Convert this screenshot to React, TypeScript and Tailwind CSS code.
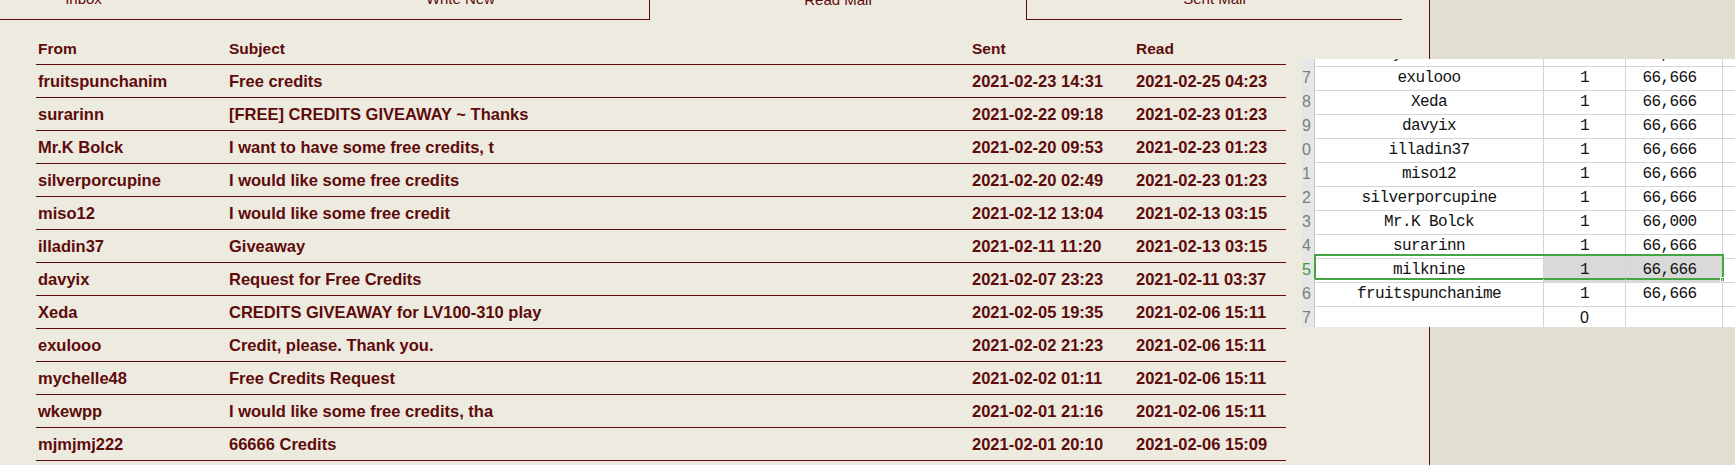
import React from 'react';

interface Mail {
  from: string;
  subject: string;
  sent: string;
  read: string;
}

const mails: Mail[] = [
  { from: 'fruitspunchanim', subject: 'Free credits', sent: '2021-02-23 14:31', read: '2021-02-25 04:23' },
  { from: 'surarinn', subject: '[FREE] CREDITS GIVEAWAY ~ Thanks', sent: '2021-02-22 09:18', read: '2021-02-23 01:23' },
  { from: 'Mr.K Bolck', subject: 'I want to have some free credits, t', sent: '2021-02-20 09:53', read: '2021-02-23 01:23' },
  { from: 'silverporcupine', subject: 'I would like some free credits', sent: '2021-02-20 02:49', read: '2021-02-23 01:23' },
  { from: 'miso12', subject: 'I would like some free credit', sent: '2021-02-12 13:04', read: '2021-02-13 03:15' },
  { from: 'illadin37', subject: 'Giveaway', sent: '2021-02-11 11:20', read: '2021-02-13 03:15' },
  { from: 'davyix', subject: 'Request for Free Credits', sent: '2021-02-07 23:23', read: '2021-02-11 03:37' },
  { from: 'Xeda', subject: 'CREDITS GIVEAWAY for LV100-310 play', sent: '2021-02-05 19:35', read: '2021-02-06 15:11' },
  { from: 'exulooo', subject: 'Credit, please. Thank you.', sent: '2021-02-02 21:23', read: '2021-02-06 15:11' },
  { from: 'mychelle48', subject: 'Free Credits Request', sent: '2021-02-02 01:11', read: '2021-02-06 15:11' },
  { from: 'wkewpp', subject: 'I would like some free credits, tha', sent: '2021-02-01 21:16', read: '2021-02-06 15:11' },
  { from: 'mjmjmj222', subject: '66666 Credits', sent: '2021-02-01 20:10', read: '2021-02-06 15:09' },
];

interface SheetRow {
  n: number;
  name: string;
  qty: string;
  amount: string;
}

const sheet: SheetRow[] = [
  { n: 16, name: 'mychelle48', qty: '1', amount: '66,666' },
  { n: 17, name: 'exulooo', qty: '1', amount: '66,666' },
  { n: 18, name: 'Xeda', qty: '1', amount: '66,666' },
  { n: 19, name: 'davyix', qty: '1', amount: '66,666' },
  { n: 20, name: 'illadin37', qty: '1', amount: '66,666' },
  { n: 21, name: 'miso12', qty: '1', amount: '66,666' },
  { n: 22, name: 'silverporcupine', qty: '1', amount: '66,666' },
  { n: 23, name: 'Mr.K Bolck', qty: '1', amount: '66,000' },
  { n: 24, name: 'surarinn', qty: '1', amount: '66,666' },
  { n: 25, name: 'milknine', qty: '1', amount: '66,666' },
  { n: 26, name: 'fruitspunchanime', qty: '1', amount: '66,666' },
  { n: 27, name: '', qty: '0', amount: '' },
];

const cols = 'grid grid-cols-[191px_743px_164px_152px]';

export default function App() {
  return (
    <div className="relative flex w-[1735px] h-[465px] overflow-hidden bg-[#E2DFD2] font-['Liberation_Sans',Arial,sans-serif] text-[#5e0b0b]">
      {/* mail page */}
      <div className="w-[1430px] h-full shrink-0 bg-[#EDEADF] border-r border-[#5c0a0a] overflow-hidden">
        {/* tabs */}
        <div className="flex -ml-[105px] -mt-[21px] h-[41px] text-[15px]">
          <div className="w-[377px] shrink-0 flex items-center justify-center border-b border-[#5c0a0a]">Inbox</div>
          <div className="w-[377px] shrink-0 flex items-center justify-center border-b border-[#5c0a0a]">Write New</div>
          <div className="w-[378px] shrink-0 flex items-center justify-center pt-[2px] border-l border-r border-[#5c0a0a]">Read Mail</div>
          <div className="w-[375px] shrink-0 flex items-center justify-center border-b border-[#5c0a0a]">Sent Mail</div>
        </div>

        {/* mail list */}
        <div className="mt-[12px] ml-[36px] w-[1250px] text-[16.5px] font-bold">
          <div className={`${cols} h-[33px] items-center border-b border-[#5c0a0a] text-[15.5px] pt-[1px]`}>
            <div className="pl-[2px]">From</div>
            <div className="pl-[2px]">Subject</div>
            <div className="pl-[2px]">Sent</div>
            <div className="pl-[2px]">Read</div>
          </div>
          {mails.map((m, i) => (
            <div key={i} className={`${cols} h-[33px] items-center border-b border-[#5c0a0a] whitespace-nowrap`}>
              <div className="pl-[2px]">{m.from}</div>
              <div className="pl-[2px]">{m.subject}</div>
              <div className="pl-[2px]">{m.sent}</div>
              <div className="pl-[2px]">{m.read}</div>
            </div>
          ))}
        </div>
      </div>
      <div className="flex-1" />

      {/* spreadsheet window lying over the page */}
      <div className="absolute left-[1302px] top-[59px] w-[433px] h-[268px] overflow-hidden bg-white">
        <div className="-mt-[20px]">
          {sheet.map((r) => {
            const sel = r.n === 25;
            return (
              <div
                key={r.n}
                className="relative grid grid-cols-[13px_229px_82px_97px_12px] h-[24px] font-['Liberation_Mono','Noto_Sans_CJK_SC',monospace] text-[16px] tracking-[-0.6px] text-[#111]"
              >
                <div className="overflow-hidden flex justify-end items-center pt-[2px] pr-[3px] bg-[#E6E6E6] border-r border-b border-[#C8C8C8] font-['Liberation_Sans',sans-serif] tracking-normal">
                  <span className={sel ? 'text-[#3B9B3B]' : 'text-[#7C7C7C]'}>{r.n}</span>
                </div>
                <div className="flex items-center justify-center pt-[3px] border-r border-b border-[#D4D4D4]">{r.name}</div>
                <div
                  className={`flex items-center justify-center pt-[3px] border-r border-b border-[#D4D4D4] ${sel ? 'bg-[#D9D9D9]' : ''} ${r.qty === '0' ? "font-['Liberation_Sans',sans-serif] tracking-normal" : ''}`}
                >
                  {r.qty}
                </div>
                <div className={`flex items-center justify-center pt-[3px] pr-[9px] border-r border-b border-[#D4D4D4] ${sel ? 'bg-[#D9D9D9]' : ''}`}>
                  {r.amount}
                </div>
                <div className="border-b border-[#D4D4D4]" />
                {sel && (
                  <>
                    <div className="absolute left-[12px] top-[-1px] w-[410px] h-[26px] border-2 border-[#45A545] pointer-events-none" />
                    <div className="absolute left-[418px] top-[22px] w-[5px] h-[5px] bg-[#45A545] border border-white" />
                  </>
                )}
              </div>
            );
          })}
        </div>
      </div>
    </div>
  );
}
